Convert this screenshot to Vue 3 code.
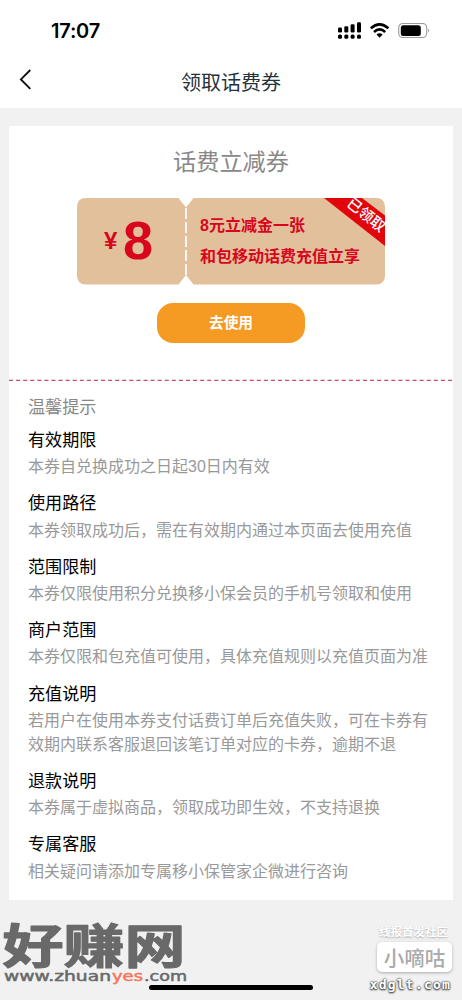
<script setup>
const tips = [
  { title: '有效期限', lines: ['本券自兑换成功之日起30日内有效'] },
  { title: '使用路径', lines: ['本券领取成功后，需在有效期内通过本页面去使用充值'] },
  { title: '范围限制', lines: ['本券仅限使用积分兑换移小保会员的手机号领取和使用'] },
  { title: '商户范围', lines: ['本券仅限和包充值可使用，具体充值规则以充值页面为准'] },
  { title: '充值说明', lines: ['若用户在使用本券支付话费订单后充值失败，可在卡券有', '效期内联系客服退回该笔订单对应的卡券，逾期不退'] },
  { title: '退款说明', lines: ['本券属于虚拟商品，领取成功即生效，不支持退换'] },
  { title: '专属客服', lines: ['相关疑问请添加专属移小保管家企微进行咨询'] },
]
</script>

<template>
  <div class="screen">
    <header class="top">
      <div class="status">
        <span class="time">17:07</span>
        <svg class="status-icons" width="96" height="20" viewBox="0 0 96 20">
          <g fill="#000">
            <rect x="1" y="7.5" width="4" height="5" rx="1.3" />
            <rect x="7.3" y="6.2" width="4" height="6.3" rx="1.3" />
            <rect x="13.6" y="4.2" width="4" height="8.3" rx="1.3" />
            <rect x="20" y="2.2" width="4" height="10.3" rx="1.3" />
            <rect x="1" y="14.5" width="4" height="4.2" rx="1.5" />
            <rect x="7.3" y="14.5" width="4" height="4.2" rx="1.5" />
            <rect x="13.6" y="14.5" width="4" height="4.2" rx="1.5" />
            <rect x="20" y="14.5" width="4" height="4.2" rx="1.5" />
            <path d="M39.5 14.5Q42.5 12 45.7 14.5L42.6 17.7Z" />
          </g>
          <g fill="none" stroke="#000" stroke-width="2.6">
            <path d="M33.8 8.3Q42.6 0.5 51.4 8.3" />
            <path d="M37 12Q42.6 6.8 48.2 12" />
          </g>
          <rect x="61.7" y="3.5" width="28" height="14" rx="4.2" fill="none" stroke="#999" stroke-width="1.1" />
          <rect x="63.8" y="5.3" width="20" height="10.6" rx="2.5" fill="#000" />
          <path d="M91.2 8.5Q93.3 10.5 91.2 12.5Z" fill="#999" />
        </svg>
      </div>
      <nav class="nav">
        <svg class="back" width="16" height="24" viewBox="0 0 16 24">
          <path d="M12.300 3 2.900 12.400 12.300 21.800" fill="none" stroke="#111" stroke-width="1.9" />
        </svg>
        <h1>领取话费券</h1>
      </nav>
    </header>

    <main class="card">
      <section class="coupon">
        <h2>话费立减券</h2>
        <div class="ticket">
          <svg class="ticket-bg" width="308" height="87" viewBox="0 0 308 87">
            <defs>
              <clipPath id="ticketClip"><rect width="308" height="86.5" rx="9" /></clipPath>
            </defs>
            <path d="M9 0H101.500L109 9.500L116.500 0H299Q308 0 308 9V77.500Q308 86.500 299 86.500H116.500L109 77L101.500 86.500H9Q0 86.500 0 77.500V9Q0 0 9 0Z" fill="#e2c09c" />
            <path d="M109 10V78" stroke="#fff" stroke-width="1.7" stroke-dasharray="11 3" />
            <g clip-path="url(#ticketClip)">
              <path d="M247 0H285L308 17.500V48Z" fill="#e1060b" />
              <text transform="translate(268.7 7) rotate(38.5)" class="ribbon-text">已领取</text>
            </g>
          </svg>
          <div class="amount"><span class="yen">¥</span><b>8</b></div>
          <div class="desc"><span>8元立减金一张</span><span>和包移动话费充值立享</span></div>
        </div>
        <button class="use">去使用</button>
      </section>
      <svg class="divider" width="444" height="2" viewBox="0 0 444 2">
        <path d="M0 1.300H444" stroke="#c74c65" stroke-width="1.2" stroke-dasharray="4 3.080" />
      </svg>
      <section class="tips">
        <h3>温馨提示</h3>
        <article v-for="tip in tips" :key="tip.title">
          <h4>{{ tip.title }}</h4>
          <p v-for="line in tip.lines" :key="line">{{ line }}</p>
        </article>
      </section>
    </main>

    <svg class="mark-left" width="200" height="76" viewBox="0 0 200 76">
      <g class="brand">
        <text transform="translate(2.500 47.500) scale(1.285 .98)">好赚网</text>
      </g>
      <g class="site">
        <text x="4" y="66" textLength="107" lengthAdjust="spacingAndGlyphs">www.zhuan</text>
        <text x="112" y="66" textLength="31" lengthAdjust="spacingAndGlyphs" class="accent">yes</text>
        <text x="144" y="66" textLength="43" lengthAdjust="spacingAndGlyphs">.com</text>
      </g>
    </svg>
    <div class="mark-right">
      <span class="community">线报首发社区</span>
      <span class="badge">小嘀咕</span>
      <span class="domain">xdglt.com</span>
    </div>
    <div class="home"></div>
  </div>
</template>

<style>
body { margin: 0; background: #f1f1f1; }
</style>

<style scoped>
.screen {
  position: relative;
  width: 462px;
  height: 1000px;
  overflow: hidden;
  background: #f1f1f1;
  font-family: "Liberation Sans", "Noto Sans CJK SC", sans-serif;
}
h1, h2, h3, h4, p { margin: 0; font-weight: 400; }
.top { height: 108px; background: #fff; }
.status {
  display: flex;
  justify-content: space-between;
  height: 55px;
  padding: 20px 29px 0 51px;
  box-sizing: border-box;
}
.time { font: 600 20px/22px Inter, sans-serif; letter-spacing: -0.2px; }
.nav {
  position: relative;
  display: flex;
  justify-content: center;
  height: 53px;
}
.back { position: absolute; left: 18px; top: 12px; }
h1 { font-size: 20px; line-height: 56px; color: #26323b; }
.card {
  width: 444px;
  height: 774px;
  margin: 18px auto 0;
  background: #fff;
}
.coupon {
  display: flex;
  flex-direction: column;
  align-items: center;
  height: 253px;
}
h2 { height: 72px; font-size: 23.2px; line-height: 73px; color: #888; }
.ticket {
  position: relative;
  display: flex;
  width: 308px;
  height: 87px;
  color: #d7061c;
}
.ticket-bg { position: absolute; inset: 0; }
.ribbon-text { font: 500 14.8px "Noto Sans CJK SC", sans-serif; fill: #fff; }
.amount {
  position: relative;
  display: flex;
  width: 123px;
  padding-left: 27px;
  box-sizing: border-box;
  line-height: 85px;
}
.yen { width: 19px; font-size: 24px; font-weight: 700; }
.amount b { font-size: 54px; }
.desc {
  position: relative;
  display: flex;
  flex-direction: column;
  padding-top: 12px;
  font-size: 16px;
  line-height: 31px;
  font-weight: 700;
  white-space: nowrap;
}
.use {
  width: 148px;
  height: 40px;
  margin-top: 18px;
  padding: 0 0 2px;
  border: 0;
  border-radius: 16px;
  background: #f59b23;
  color: #fff;
  font: 700 14.7px/38px "Noto Sans CJK SC", sans-serif;
}
.divider { display: block; }
.tips { padding: 13px 0 0 19px; }
h3 { height: 33px; font-size: 17.1px; line-height: 27px; color: #888; }
article { margin-bottom: 11.1px; }
h4 { height: 28.3px; font-size: 17.1px; line-height: 27px; color: #000; }
p { font-size: 16px; line-height: 24px; color: #999; white-space: nowrap; }
.mark-left { position: absolute; left: 0; top: 915px; overflow: visible; }
.brand text {
  font: 700 47.5px "Noto Sans CJK SC", sans-serif;
  fill: #696969;
  stroke: #696969;
  stroke-width: 1.2px;
  stroke-linejoin: round;
}
.site text {
  font: 400 14px "DejaVu Sans", sans-serif;
  fill: #696969;
  stroke: #696969;
  stroke-width: 0.5px;
}
.site .accent { fill: #f4775a; stroke: #f4775a; }
.mark-right {
  position: absolute;
  right: 10px;
  top: 922px;
  display: flex;
  flex-direction: column;
  align-items: flex-end;
  font-family: "Noto Sans CJK SC", sans-serif;
}
.community {
  margin-right: 4px;
  font-size: 11.5px;
  line-height: 18px;
  font-weight: 700;
  color: #fff;
  text-shadow: 0 1px 2px #aaa;
}
.badge {
  width: 75px;
  height: 30px;
  margin-top: 2px;
  border-radius: 5px;
  background: #fff;
  box-shadow: 0 1px 3px #aaa;
  color: #aaa;
  font-size: 20.5px;
  line-height: 30px;
  text-align: center;
  font-weight: 500;
}
.domain {
  margin: 4px 1px 0 0;
  font: 700 13px/18px "DejaVu Sans Mono", monospace;
  letter-spacing: 1.2px;
  color: #fff;
  text-shadow: 0 1px 2px #333, 0 0 2px #444, 0 0 2px #555;
}
.home {
  position: absolute;
  left: 149px;
  top: 985px;
  width: 164px;
  height: 5px;
  border-radius: 3px;
  background: #000;
}
</style>
